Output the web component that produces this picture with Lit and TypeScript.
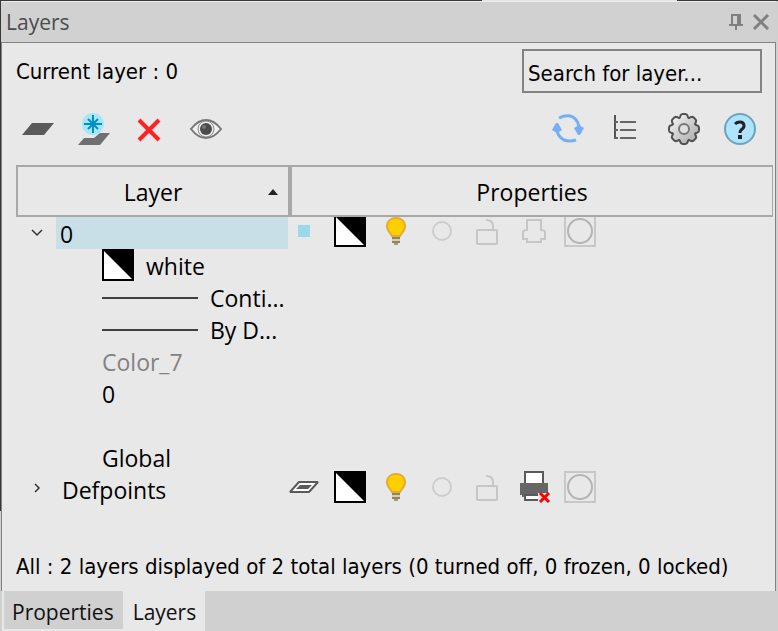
import { LitElement, html, svg, css, nothing } from "lit";
import { customElement, property, state } from "lit/decorators.js";
import { classMap } from "lit/directives/class-map.js";

const gearPath = (() => {
  const pts: string[] = [];
  const steps = 160;
  for (let i = 0; i < steps; i++) {
    const a = (i / steps) * Math.PI * 2;
    const notch = Math.pow((1 - Math.cos(a * 8)) / 2, 3);
    const r = 15 - notch * 3;
    pts.push(`${(17 + r * Math.sin(a)).toFixed(2)} ${(16 - r * Math.cos(a)).toFixed(2)}`);
  }
  return `M${pts.join("L")}Z`;
})();

const icons: Record<string, unknown> = {
  layer: svg`<path d="M10 10H32L22 22H0Z" fill="#5a5a5a"/>`,
  freeze: svg`
    <circle cx="15" cy="11" r="11" fill="#a6e6fc"/>
    <path d="M15 2V20M6 11H24" stroke="#0090c8" stroke-width="2"/>
    <path d="M10 6L20 16M20 6L10 16" stroke="#0090c8" stroke-width="2"/>
    <path d="M22 20H32L22 32H0L6 25H16Z" fill="#707070"/>`,
  remove: svg`<path d="M5 7L25 27M25 7L5 27" stroke="#ff2222" stroke-width="4"/>`,
  eye: svg`
    <path d="M1 16Q8 7 16 7T31 16Q24 25 16 25T1 16Z" fill="#f2f2f2" stroke="#777" stroke-width="2"/>
    <circle cx="16" cy="16" r="8" fill="#eee" stroke="#888" stroke-width="1"/>
    <circle cx="16" cy="16" r="6" fill="#4c4c4c"/>
    <circle cx="14" cy="14" r="2" fill="#777"/>`,
  refresh: svg`
    <path d="M6 5Q14 1 20 4Q26 8 26 16" fill="none" stroke="#76aef5" stroke-width="3"/>
    <path d="M23 27Q16 29 11 27Q4 23 4 16" fill="none" stroke="#76aef5" stroke-width="3"/>
    <path d="M21 15L26 12L31 15L27 22H25Z M-1 17L3 10H5L9 17L4 20Z" fill="#76aef5"/>`,
  tree: svg`
    <path d="M5 2V26" stroke="#555" stroke-width="2"/>
    <path d="M5 9H8M10 9H26M5 17H8M10 17H26M5 25H8M10 25H26" stroke="#666" stroke-width="2"/>`,
  gear: svg`
    <defs><linearGradient id="g" x2="1" y2="1"><stop offset="0" stop-color="#fafafa"/><stop offset="1" stop-color="#a4a4a4"/></linearGradient></defs>
    <path d=${gearPath} fill="url(#g)" stroke="#505050" stroke-width="2"/>
    <circle cx="17" cy="16" r="5" fill="#e0e0e0" stroke="#777" stroke-width="2"/>`,
  help: svg`
    <circle cx="16" cy="16" r="15" fill="#b0e3ff" stroke="#6aa3bd" stroke-width="2"/>
    <path d="M11 11Q13 9 16 9Q20 9 20 13Q20 15 17 17Q16 18 16 20" fill="none" stroke="#222" stroke-width="3"/>
    <rect x="14" y="22" width="4" height="4" fill="#222"/>`,
  current: svg`<rect x="10" y="10" width="12" height="12" fill="#99d9ea"/>`,
  sheet: svg`
    <path d="M11 11H30L21 21H2Z" fill="#fff" stroke="#5a5a5a" stroke-width="2" stroke-linejoin="bevel"/>
    <path d="M12 14H24L20 18H8Z" fill="#5a5a5a"/>`,
  swatch: svg`
    <rect width="32" height="32" fill="#000"/>
    <path d="M2 2L30 30H2Z" fill="#fff"/>`,
  bulb: svg`
    <path d="M12 21C11 18 7 17 7 11.500C7 6 11 3 16 3S25 6 25 11.500C25 17 21 18 20 21Z" fill="#ffd000" stroke="#e8a92c" stroke-width="2"/>
    <path d="M12 23H20M12 27H20" stroke="#8f8560" stroke-width="2"/>
    <path d="M12 25H20" stroke="#d8cfb0" stroke-width="2"/>
    <path d="M14 29H18" stroke="#a39a78" stroke-width="2"/>`,
  thaw: svg`<circle cx="16" cy="16" r="9" fill="none" stroke="#cdcdcd" stroke-width="2"/>`,
  lock: svg`
    <rect x="5" y="15" width="20" height="14" rx="1" fill="none" stroke="#c6c6c6" stroke-width="2"/>
    <path d="M14 5Q21 5 21 11V14" fill="none" stroke="#c6c6c6" stroke-width="2"/>`,
  print: svg`
    <path d="M9 5H23V15Q27 15 27 17V24H23V27H9V24H5V17Q5 15 9 15Z" fill="none" stroke="#c6c6c6" stroke-width="2"/>`,
  noprint: svg`
    <rect x="7" y="1" width="18" height="14" fill="#fff" stroke="#5a5a5a" stroke-width="2"/>
    <path d="M2 12H30V24H28V26H4V24H2Z" fill="#666"/>
    <rect x="7" y="24" width="18" height="5" fill="#fff" stroke="#5a5a5a" stroke-width="2"/>
    <rect x="20" y="22" width="12" height="10" fill="#e8e8e8"/>
    <path d="M22 22L31 31M31 22L22 31" stroke="#f00" stroke-width="3"/>`,
  viewport: svg`
    <rect x="1" y="1" width="30" height="30" fill="none" stroke="#c8c8c8" stroke-width="2"/>
    <circle cx="16" cy="16" r="12" fill="none" stroke="#b4b4b4" stroke-width="2"/>`,
};

@customElement("layer-icon")
export class LayerIcon extends LitElement {
  static styles = css`
    :host { display: block; width: 32px; height: 32px; flex: none; }
    svg { display: block; overflow: visible; }
  `;
  @property() name = "layer";
  render() {
    return html`<svg width="32" height="32" viewBox="0 0 32 32" aria-hidden="true">${icons[this.name]}</svg>`;
  }
}

interface Layer {
  name: string;
  props: [icon: string, label: string][];
}

const layers: Layer[] = [
  {
    name: "0",
    props: [["current", "Current"], ["swatch", "Colour"], ["bulb", "On"], ["thaw", "Thawed"], ["lock", "Unlocked"], ["print", "Plotted"], ["viewport", "Viewport"]],
  },
  {
    name: "Defpoints",
    props: [["sheet", "Make current"], ["swatch", "Colour"], ["bulb", "On"], ["thaw", "Thawed"], ["lock", "Unlocked"], ["noprint", "Not plotted"], ["viewport", "Viewport"]],
  },
];

@customElement("app-root")
export class AppRoot extends LitElement {
  static styles = css`
    :host { display: block; }
    * { box-sizing: border-box; }
    button {
      border: 0; padding: 0; margin: 0; background: none; color: inherit; font: inherit; cursor: pointer;
    }
    .shell {
      display: flex; flex-direction: column; min-height: 100vh; padding: 1px 2px 0 1px;
      font: 23px/32px "Open Sans", "Noto Sans", sans-serif; color: #000;
      background:
        linear-gradient(90deg, #39363a 62%, #e4e4e4 62% 87%, #39363a 87%) 0 0 / 100% 1px no-repeat,
        linear-gradient(#39363a 81%, #d0d0d0 81%) 0 0 / 1px 100% no-repeat,
        #d0d0d0;
    }
    .title {
      display: flex; align-items: center; height: 42px; padding: 0 6px 0 5px;
      border-top: 1px solid #ececec; border-bottom: 1px solid #828282;
      background: #d1d1d1; color: #4c4c4c;
    }
    .title h1 { flex: 1; margin: 0; font: inherit; font-size: 21px; }
    .title button { display: flex; }
    .title .pin { margin-right: 8px; }
    .panel {
      flex: 1; display: flex; flex-direction: column;
      border: solid #828282; border-width: 0 1px; background: #e8e8e8;
    }
    .ui { font-family: "DejaVu Sans Condensed", "Noto Sans", sans-serif; font-size: 22px; }
    .find { display: flex; align-items: center; justify-content: space-between; padding: 6px 13px 0 14px; }
    .find span { padding-top: 2px; }
    .find input {
      width: 240px; height: 44px; padding: 4px 4px 0; border: 2px solid #828282; border-radius: 0;
      background: #e8e8e8; color: #000; outline: 0;
    }
    .find input::placeholder { color: #000; opacity: 1; }
    .tools { display: flex; justify-content: space-between; padding: 20px 19px 20px 20px; }
    .group { display: flex; gap: 24px; }
    .group.end { gap: 25px; }
    .list { padding: 0 2px 0 14px; }
    table { width: 100%; table-layout: fixed; border-collapse: separate; border-spacing: 0; }
    .c1 { width: 272px; }
    th {
      position: sticky; top: 0; z-index: 1; height: 52px; padding: 2px 0 0;
      border: solid #a8a8a8; border-width: 2px 0; background: #e8e8e8; font-weight: 400;
    }
    th:first-child { border-left-width: 2px; }
    th:last-child { border-left-width: 4px; border-right-width: 1px; }
    .sort { display: flex; align-items: center; width: 100%; padding-right: 10px; }
    .sort span { flex: 1; padding-left: 20px; }
    .sort svg { flex: none; }
    td { height: 32px; padding: 0; vertical-align: top; }
    .name { display: flex; height: 32px; padding-left: 14px; }
    .name button { display: flex; align-items: center; width: 26px; }
    .name span { flex: 1; padding: 1px 0 0 6px; }
    .name.selected span { padding-left: 4px; background: #c9dfe7; }
    .props { display: flex; gap: 14px; height: 32px; margin-top: -2px; }
    .details { margin: 0; padding: 0 0 0 86px; list-style: none; white-space: nowrap; }
    .details li { display: flex; align-items: center; gap: 12px; height: 32px; }
    .details span { padding-top: 2px; }
    .rule { width: 96px; height: 2px; margin-top: 2px; background: #404040; }
    .dim { color: #828282; }
    .status { margin: auto 0 0; padding: 0 14px 8px; white-space: nowrap; }
    .tabs { display: flex; height: 40px; padding-left: 1px; background: #d0d0d0; font-size: 21px; }
    .tabs button {
      padding: 4px 9px 0 8px; border: solid #e8e8e8; border-width: 0 0 2px 2px; background: #d0d0d0; color: #111;
    }
    .tabs .active { background: #e8e8e8; border-bottom: 0; padding-top: 2px; }
  `;

  @state() private open: Record<string, boolean> = { "0": true };
  @state() private selected = "0";
  @state() private tab = "Layers";

  private tool(icon: string, label: string) {
    return html`<button aria-label=${label} title=${label}><layer-icon name=${icon}></layer-icon></button>`;
  }

  private row(layer: Layer) {
    const open = !!this.open[layer.name];
    return html`
      <tr>
        <td>
          <div class=${classMap({ name: true, selected: this.selected === layer.name })} @click=${() => (this.selected = layer.name)}>
            <button aria-label="Expand ${layer.name}" aria-expanded=${open}
              @click=${() => (this.open = { ...this.open, [layer.name]: !open })}>
              <svg width="14" height="14" viewBox="0 0 14 14" fill="none" stroke="#333" stroke-width="1.500">
                <path d=${open ? "M2 4L7 9L12 4" : "M5 2L9 6L5 10"} />
              </svg>
            </button>
            <span>${layer.name}</span>
          </div>
        </td>
        <td>
          <div class="props">${layer.props.map(([icon, label]) => this.tool(icon, label))}</div>
        </td>
      </tr>
      ${open
        ? html`<tr>
            <td>
              <ul class="details">
                <li><layer-icon name="swatch"></layer-icon><span>white</span></li>
                <li><i class="rule"></i><span>Conti...</span></li>
                <li><i class="rule"></i><span>By D...</span></li>
                <li class="dim"><span>Color_7</span></li>
                <li><span>0</span></li>
                <li></li>
                <li><span>Global</span></li>
              </ul>
            </td>
            <td></td>
          </tr>`
        : nothing}
    `;
  }

  render() {
    return html`
      <div class="shell">
        <header class="title">
          <h1>Layers</h1>
          <button class="pin" aria-label="Pin">
            <svg width="16" height="18" viewBox="0 0 16 18" fill="none" stroke="#808080" stroke-width="2">
              <path d="M4 12V2H12V12M1 12H15M8 12V17M10 2V12" />
            </svg>
          </button>
          <button aria-label="Close">
            <svg width="18" height="16" viewBox="0 0 18 16" stroke="#808080" stroke-width="3">
              <path d="M2 1L16 15M16 1L2 15" />
            </svg>
          </button>
        </header>
        <main class="panel">
          <div class="find">
            <span class="ui">Current layer : 0</span>
            <input class="ui" type="text" aria-label="Search for layer" placeholder="Search for layer..." />
          </div>
          <div class="tools">
            <div class="group">
              ${this.tool("layer", "New layer")} ${this.tool("freeze", "New frozen layer")}
              ${this.tool("remove", "Delete layer")} ${this.tool("eye", "Visibility")}
            </div>
            <div class="group end">
              ${this.tool("refresh", "Refresh")} ${this.tool("tree", "Tree view")}
              ${this.tool("gear", "Settings")} ${this.tool("help", "Help")}
            </div>
          </div>
          <div class="list">
            <table>
              <colgroup><col class="c1" /><col /></colgroup>
              <thead>
                <tr>
                  <th scope="col">
                    <button class="sort">
                      <span>Layer</span>
                      <svg width="10" height="6" viewBox="0 0 10 6"><path d="M5 0L10 6H0Z" fill="#222" /></svg>
                    </button>
                  </th>
                  <th scope="col">Properties</th>
                </tr>
              </thead>
              <tbody>${layers.map((l) => this.row(l))}</tbody>
            </table>
          </div>
          <p class="status ui">All : 2 layers displayed of 2 total layers (0 turned off, 0 frozen, 0 locked)</p>
        </main>
        <nav class="tabs">
          ${["Properties", "Layers"].map(
            (t) => html`<button class=${classMap({ active: this.tab === t })} @click=${() => (this.tab = t)}>${t}</button>`
          )}
        </nav>
      </div>
    `;
  }
}
